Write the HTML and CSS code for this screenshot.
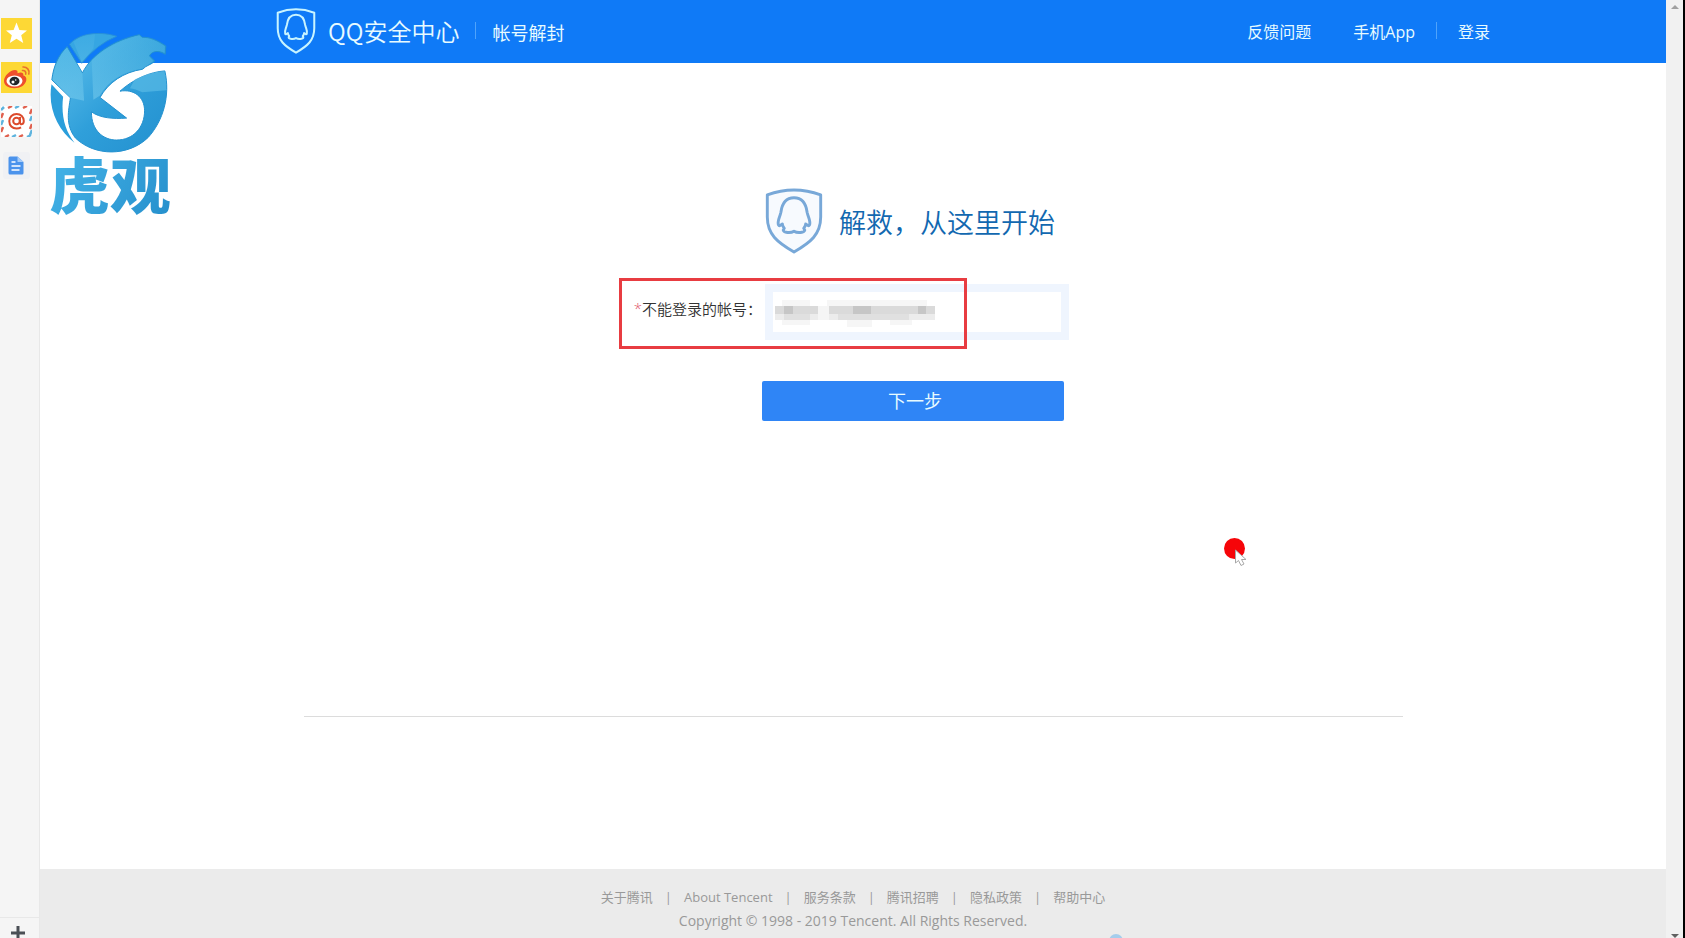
FILE: index.html
```html
<!DOCTYPE html>
<html lang="zh-CN">
<head>
<meta charset="utf-8">
<title>QQ安全中心 - 帐号解封</title>
<link rel="stylesheet" href="styles.css">
</head>
<body>
<div class="browser">
  <aside class="rail">
    <div class="rail-items">
      <button class="tile tile-yellow" aria-label="收藏">
        <svg viewBox="0 0 31 31"><path d="M15.5 4.500 18.400 12 26 12.400 20.200 17.300 22.200 25 15.500 20.800 8.800 25 10.800 17.300 5 12.400 12.600 12Z" fill="#fff"/></svg>
      </button>
      <button class="tile tile-yellow" aria-label="微博">
        <svg viewBox="0 0 31 31">
          <path d="M3 19C3 14 9 8 14 8c2 0 3 1 2.500 3.200 3-1.200 6.500-1 5.800 2.300 2 .5 3.500 2 3 4.700-1 5-6 8-12 8S3 23.500 3 19Z" fill="#ee4f2c"/>
          <ellipse cx="13.500" cy="19" rx="8" ry="5.500" fill="#fff"/>
          <ellipse cx="13.500" cy="19" rx="5" ry="4.300" fill="#20262b"/><circle cx="12" cy="20" r="1.500" fill="#fff"/><circle cx="14.700" cy="18" r=".8" fill="#fff"/>
          <path d="M21.500 8.500c2.300-.3 3.800 1.500 3.200 3.600M22 5c4-.3 6.800 3 5.800 7" fill="none" stroke="#e8712c" stroke-width="1.600" stroke-linecap="round"/>
        </svg>
      </button>
      <button class="tile" aria-label="邮箱">
        <svg viewBox="0 0 31 31">
          <rect width="31" height="31" fill="#fff"/>
          <path d="M7 2l4-2M22 2l4-2M4 31l4-2M18 31l4-2M0 12l2-5M0 26l2-5M29 8l2-5M29 23l2-5" stroke="#e0614f" stroke-width="2.500"/>
          <path d="M0 4l3-3M14 2l4-2M11 31l4-2M26 31l4-2M0 19l2-5M29 15l2-5M29 29l2-5" stroke="#5fb4de" stroke-width="2.500"/>
          <circle cx="15.500" cy="15" r="3.300" fill="none" stroke="#dc4a2c" stroke-width="2"/>
          <path d="M19 11v5.500c0 2.600 3.800 2.300 3.800-1.500 0-4.200-3-7-7.200-7s-7.300 3-7.300 7.200 3 7.300 7.200 7.300c2 0 3.300-.4 4.500-1.200" fill="none" stroke="#dc4a2c" stroke-width="2"/>
        </svg>
      </button>
      <button class="tile" aria-label="文档">
        <svg viewBox="0 0 31 31"><rect x="2" y="2" width="27" height="27" rx="3" fill="#f0f1f4"/><path d="M9 6.500h7.500l6 5.500v11a1.500 1.500 0 0 1-1.500 1.500H9A1.500 1.500 0 0 1 7.500 23V8A1.500 1.500 0 0 1 9 6.500Z" fill="#4b93ec"/><path d="M16.500 6.500v5.500h6Z" fill="#a6cbf8"/><path d="M10.500 12h4M10.500 16h9M10.500 20h8" stroke="#fff" stroke-width="1.600"/></svg>
      </button>
    </div>
    <button class="rail-add" aria-label="添加">
      <svg viewBox="0 0 14 14"><path d="M7 0v14M0 7h14" stroke="#4a4f55" stroke-width="3"/></svg>
    </button>
  </aside>

  <div class="page">
    <header class="topbar">
      <a class="brand" href="#">
        <svg class="brand-shield" viewBox="0 0 58 68" aria-hidden="true">
          <path d="M2 7Q29-3 56 7V30C56 48 46 56 29 66 12 56 2 48 2 30Z"/>
          <path d="M29 10C20 10 16.500 17 15.500 25C14.500 30 11.500 34 13 38C14 40 15.500 38 17 37C17 39 18 40 19 41.500C15 46 25 47 29 44.500C33 47 43 46 39 41.500C40 40 41 39 41 37C42.500 38 44 40 45 38C46.500 34 43.500 30 42.500 25C41.500 17 38 10 29 10Z"/>
        </svg>
        <span class="brand-name">QQ安全中心</span>
      </a>
      <span class="rule"></span>
      <span class="section">帐号解封</span>
      <nav class="topnav">
        <a href="#">反馈问题</a>
        <a href="#">手机App</a>
        <span class="rule"></span>
        <a href="#">登录</a>
      </nav>
    </header>

    <main class="main">
      <form class="rescue">
        <h1 class="title">
          <svg class="title-shield" viewBox="0 0 58 68" aria-hidden="true">
            <path d="M1.500 7Q29-3 56.500 7V30C56.500 48 46 56 29 66 12 56 1.500 48 1.500 30Z"/>
            <path d="M29 10C20 10 16.500 17 15.500 25C14.500 30 11.500 34 13 38C14 40 15.500 38 17 37C17 39 18 40 19 41.500C15 46 25 47 29 44.500C33 47 43 46 39 41.500C40 40 41 39 41 37C42.500 38 44 40 45 38C46.500 34 43.500 30 42.500 25C41.500 17 38 10 29 10Z"/>
          </svg>
          <span>解救，从这里开始</span>
        </h1>
        <label class="label" for="account"><span class="star">*</span>不能登录的帐号：</label>
        <div class="field">
          <input class="account" id="account" type="text">
          <svg class="mosaic" viewBox="0 0 160 28" aria-hidden="true">
            <path d="M0 7h160v14H0z" fill="#ececec"/>
            <path d="M7 1h28v6H7zM52 1h100v6H52zM7 21h28v5H7zM72 21h25v7H72zM115 21h22v5h-22z" fill="#f6f6f6"/>
            <path d="M0 7h43v8H0zM54 7h106v8H54z" fill="#dadada"/>
            <path d="M9 7h9v8H9zM78 7h18v8H78zM143 7h8v8h-8z" fill="#c6c6c6"/>
            <path d="M9 15h26v6H9zM63 15h71v6H63z" fill="#e0e0e0"/>
            <path d="M43 7h11v14H43z" fill="#f5f5f5"/>
          </svg>
        </div>
        <button class="next" type="button">下一步</button>
        <div class="highlight"></div>
      </form>
      <hr class="divider">
    </main>

    <footer class="footer">
      <div class="links">
        <a href="#">关于腾讯</a><span>|</span><a href="#">About Tencent</a><span>|</span><a href="#">服务条款</a><span>|</span><a href="#">腾讯招聘</a><span>|</span><a href="#">隐私政策</a><span>|</span><a href="#">帮助中心</a>
      </div>
      <div class="copyright">Copyright © 1998 - 2019 Tencent. All Rights Reserved.</div>
    </footer>
  </div>

  <div class="scrollbar" aria-hidden="true">
    <svg viewBox="0 0 8 4"><path d="M0 4 4 0 8 4Z" fill="#a0a0a0"/></svg>
    <svg viewBox="0 0 8 4"><path d="M0 0h8L4 4Z" fill="#606060"/></svg>
  </div>
</div>

<div class="watermark">
  <svg class="watermark-mark" viewBox="147 90 360 370" aria-hidden="true">
    <defs>
      <linearGradient id="body" x1="0" y1="0" x2="1" y2="1"><stop offset="0" stop-color="#4db6e6"/><stop offset=".3" stop-color="#48b0e3"/><stop offset=".55" stop-color="#2f9fda"/><stop offset="1" stop-color="#2390cf"/></linearGradient>
      <linearGradient id="shine" x1="0" y1="0" x2="0" y2="1"><stop offset="0" stop-color="#6bc8ea" stop-opacity=".15"/><stop offset="1" stop-color="#7fd0ef" stop-opacity=".5"/></linearGradient>
    </defs>
    <path d="M208 130C240 92 310 92 350 106Q290 130 245 187Z" fill="#36a6e2" stroke="#2891d8" stroke-width="3"/>
    <path d="M201 137 247 216C275 160 340 118 418 101L427 109C450 108 472 118 498 135L496 160C478 148 456 148 449 165L465 180C455 192 440 192 428 205 370 214 325 245 300 290L380 352C340 355 300 352 274 333 274 390 310 418 350 418 400 418 434 380 434 330 434 288 402 264 360 271 400 235 450 213 495 210 512 285 490 360 445 410 385 468 285 468 226 412 195 372 205 330 211 291L155 237C160 195 175 162 201 137Z" fill="url(#body)" stroke="#2391cf" stroke-width="3"/>
    <path d="M275 178C310 145 355 120 418 103L427 110C450 110 472 120 495 136L494 156C478 146 454 150 447 165L460 180C450 190 440 192 428 203 370 212 325 240 299 285L280 297Z" fill="url(#shine)"/>
    <path d="M201 140 247 218 252 300 211 291 157 237C162 198 176 165 201 140ZM220 122Q250 98 285 100L280 143 245 183Z" fill="url(#shine)"/>
    <path d="M405 235Q450 214 494 211 501 240 499 268L427 274Q405 264 390 262Z" fill="#60bfe7" opacity=".6"/>
    <path d="M154 250 189 288C182 345 195 390 223 426 172 385 142 322 154 250Z" fill="#2b9edb"/>
  </svg>
  <div class="watermark-name">虎观</div>
</div>

<svg class="pointer" viewBox="0 0 24 30" aria-hidden="true">
  <circle cx="10.500" cy="10.500" r="10.500" fill="#f60509"/>
  <path d="M11.500 12v13l3-2.500 2.500 5 3-1.500-2.500-4.500h4.500Z" fill="#fff" stroke="#a8a8a8"/>
</svg>
<span class="bubble"></span>
</body>
</html>
```
FILE: styles.css
```css
* { box-sizing: border-box; }
body {
  margin: 0;
  overflow: hidden;
  background: #fff;
  font-family: "Open Sans", "Noto Sans CJK SC", sans-serif;
  font-size: 16px;
  color: #333;
}
a { color: inherit; text-decoration: none; }
button { border: 0; padding: 0; background: none; font: inherit; }
svg { display: block; }

.browser { display: flex; height: 100vh; border-right: 2px solid #000; }

.rail {
  width: 40px;
  display: flex;
  flex-direction: column;
  justify-content: space-between;
  background: #f5f5f5;
  border-right: 1px solid #e8e8e8;
}
.rail-items { display: flex; flex-direction: column; gap: 13px; padding: 18px 0 0 1px; }
.tile { width: 31px; height: 31px; }
.tile-yellow { background: #fdd835; }
.rail-add { height: 21px; padding: 8px 0 0 11px; overflow: hidden; border-top: 1px solid #e8e8e8; }
.rail-add svg { width: 14px; height: 14px; }

.page { flex: 1; display: flex; flex-direction: column; }

.topbar {
  height: 63px;
  display: flex;
  align-items: center;
  padding: 0 176px 2px 236px;
  background: #0f7af7;
  color: #e8fbff;
}
.brand { display: flex; align-items: center; gap: 12px; }
.brand-shield { width: 40px; height: 46px; fill: none; stroke: #c8f4ff; stroke-width: 3; stroke-linejoin: round; }
.brand-name { font-family: "Noto Sans CJK SC", sans-serif; font-size: 24px; font-weight: 350; }
.rule { width: 1px; height: 17px; background: #4fa3fb; }
.brand + .rule { margin: 0 16px; }
.section { font-size: 18px; padding-top: 2px; }
.topnav { display: flex; align-items: center; margin-left: auto; }
.topnav a + a { margin-left: 42px; }
.topnav .rule { margin: 0 21px; }

.main { flex: 1; display: flex; flex-direction: column; align-items: center; padding-top: 125px; }
.rescue {
  position: relative;
  width: 436px;
  flex: 1;
  display: grid;
  grid-template-columns: 127px 1fr;
  grid-template-rows: 66px 56px 40px;
  row-gap: 30px;
}
.title {
  grid-column: 2;
  display: flex;
  align-items: center;
  gap: 16px;
  margin: 0;
  padding-left: 3px;
  color: #1268b0;
  font-size: 27px;
  font-weight: 350;
  white-space: nowrap;
}
.title-shield { width: 58px; height: 66px; flex: none; fill: #f7fafe; stroke: #78a8d8; stroke-width: 3; stroke-linejoin: round; }
.label { display: flex; justify-content: flex-end; padding-top: 14px; white-space: nowrap; font-size: 15px; font-weight: 350; }
.star { color: #e0566a; }
.field { position: relative; width: 304px; margin-left: 3px; }
.account {
  display: block;
  width: 100%;
  height: 56px;
  border: 8px solid #eff5fe;
  border-radius: 0;
  background: #fff;
  outline: 0;
}
.mosaic { position: absolute; left: 10px; top: 15px; width: 160px; height: 28px; }
.next {
  grid-column: 2;
  width: 302px;
  height: 40px;
  margin-top: 11px;
  padding: 0 0 2px 4px;
  border-radius: 2px;
  background: #2f85f6;
  color: #e8fbff;
  font-size: 18px;
}
.highlight {
  position: absolute;
  left: -16px;
  top: 90px;
  width: 348px;
  height: 71px;
  border: 3px solid #e83c41;
  pointer-events: none;
}
.divider { width: calc(100% - 527px); margin: 0 0 152px; border: 0; border-top: 1px solid #dcdcdc; }

.footer {
  height: 69px;
  padding-top: 17px;
  background: #ebebeb;
  color: #999;
  font-size: 13px;
  line-height: 23px;
  text-align: center;
}
.links { display: flex; justify-content: center; gap: 12px; }
.copyright { font-size: 14px; }

.scrollbar {
  width: 17px;
  display: flex;
  flex-direction: column;
  align-items: center;
  justify-content: space-between;
  padding-top: 5px;
  background: #f1f1f1;
}
.scrollbar svg { width: 8px; height: 4px; }

.watermark { position: absolute; left: 49px; top: 31px; width: 124px; }
.watermark-mark { width: 120px; height: 123px; }
.watermark-name {
  padding-bottom: 8px;
  font-family: "Noto Sans CJK SC", sans-serif;
  font-size: 61px;
  font-weight: 900;
  line-height: 58px;
  white-space: nowrap;
  background: linear-gradient(120deg, #45b4e8, #258fcc);
  background-clip: text;
  -webkit-background-clip: text;
  color: transparent;
}
.pointer { position: absolute; left: 1224px; top: 538px; width: 24px; height: 30px; }
.bubble { position: absolute; left: 1109px; top: 934px; width: 14px; height: 14px; border-radius: 50%; background: #a5cdec; }
```
